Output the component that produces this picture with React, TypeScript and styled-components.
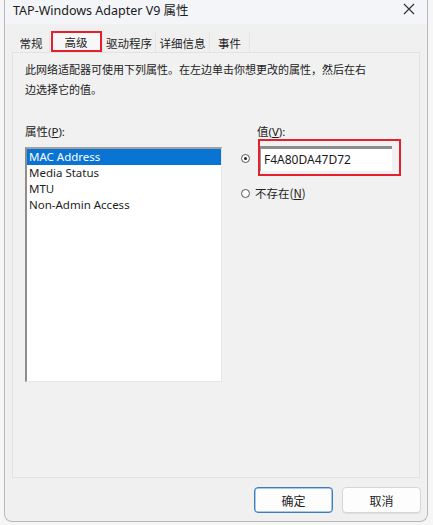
import React from "react";
import styled, { createGlobalStyle } from "styled-components";

const Global = createGlobalStyle`
  html, body { margin: 0; padding: 0; }
  body {
    background: #f6f6f6;
    font-family: "Noto Sans", "Noto Sans CJK SC", sans-serif;
    font-size: 12px;
    color: #1b1b1b;
    width: 433px;
    height: 525px;
    overflow: hidden;
  }
`;

const Stage = styled.div`
  width: 433px;
  height: 525px;
  display: flex;
`;

const Window = styled.div`
  margin-left: 4px;
  width: 422px;
  height: 521px;
  background: #f0f0f0;
  border: 1px solid #b9b9b9;
  border-top: none;
  border-radius: 0 0 8px 8px;
  display: flex;
  flex-direction: column;
`;

const TitleBar = styled.div`
  height: 30px;
  display: flex;
  align-items: center;
  justify-content: space-between;
  padding: 0 8px 0 8px;
  background: #f3f5f8;
  box-sizing: border-box;
  margin-top: -6px;
`;

const Title = styled.span`
  font-size: 12.5px;
  color: #202020;
`;

const Close = styled.div`
  width: 16px;
  height: 16px;
  display: flex;
  align-items: center;
  justify-content: center;
  margin-right: 2px;
`;

const TabRow = styled.div`
  display: flex;
  margin: 8px 0 0 8px;
  height: 20px;
  align-items: flex-end;
  position: relative;
`;

const Tab = styled.div<{ $w: number; $active?: boolean }>`
  width: ${(p) => p.$w}px;
  height: ${(p) => (p.$active ? 20 : 19)}px;
  box-sizing: border-box;
  display: flex;
  align-items: center;
  justify-content: center;
  font-size: 11.5px;
  color: #1e1e1e;
  background: ${(p) => (p.$active ? "#f7f7f7" : "#f0f0f0")};
  border-right: 1px solid #e4e4e4;
  font-family: "Noto Sans CJK SC", sans-serif;
`;

const Highlight = styled.div<{ $l: number; $t: number; $w: number; $h: number }>`
  position: absolute;
  left: ${(p) => p.$l}px;
  top: ${(p) => p.$t}px;
  width: ${(p) => p.$w}px;
  height: ${(p) => p.$h}px;
  border: 2px solid #e3202c;
  box-sizing: border-box;
  pointer-events: none;
`;

const Panel = styled.div`
  margin: 0 0 0 7px;
  width: 408px;
  height: 426px;
  box-sizing: border-box;
  border: 1px solid #e2e2e2;
  background: #f1f1f1;
  padding: 6px 12px 0 12px;
  display: flex;
  flex-direction: column;
`;

const Desc = styled.p`
  margin: 0;
  font-family: "Noto Sans CJK SC", sans-serif;
  font-size: 11px;
  line-height: 20px;
  color: #222;
  white-space: nowrap;
`;

const Columns = styled.div`
  display: flex;
  margin-top: 24px;
`;

const LeftCol = styled.div`
  width: 197px;
  display: flex;
  flex-direction: column;
`;

const Label = styled.div<{ $indent?: number }>`
  font-family: "Noto Sans", "Noto Sans CJK SC", sans-serif;
  font-size: 11.5px;
  height: 17px;
  line-height: 17px;
  margin-left: ${(p) => p.$indent ?? 0}px;
  color: #222;
  u { text-decoration: underline; }
`;

const ListBox = styled.div`
  margin-top: 7px;
  height: 235px;
  box-sizing: border-box;
  background: #fff;
  border-left: 2px solid #8e8e8e;
  border-top: 2px solid #a0a0a0;
  border-right: 1px solid #e6e6e6;
  border-bottom: 1px solid #e6e6e6;
`;

const ListItem = styled.div<{ $sel?: boolean }>`
  height: 16px;
  line-height: 16px;
  padding-left: 2px;
  font-size: 11.5px;
  font-family: "Noto Sans", sans-serif;
  background: ${(p) => (p.$sel ? "#0a74d4" : "transparent")};
  color: ${(p) => (p.$sel ? "#fff" : "#1e1e1e")};
`;

const RightCol = styled.div`
  margin-left: 19px;
  display: flex;
  flex-direction: column;
  position: relative;
`;

const RadioRow = styled.div<{ $mt: number }>`
  display: flex;
  align-items: center;
  margin-top: ${(p) => p.$mt}px;
`;

const Radio = styled.span<{ $on?: boolean }>`
  width: 9px;
  height: 9px;
  border-radius: 50%;
  border: 1px solid #555;
  box-sizing: border-box;
  display: inline-flex;
  align-items: center;
  justify-content: center;
  background: #fff;
  &::after {
    content: "";
    width: 3px;
    height: 3px;
    border-radius: 50%;
    background: ${(p) => (p.$on ? "#222" : "transparent")};
  }
`;

const Edit = styled.div`
  margin-left: 9px;
  width: 133px;
  height: 25px;
  box-sizing: border-box;
  background: #fff;
  border-top: 3px solid #8c8c8c;
  border-left: 2px solid #9a9a9a;
  padding-left: 3px;
  display: flex;
  align-items: center;
  font-size: 12px;
  font-family: "Noto Sans", sans-serif;
  color: #1a1a1a;
  padding-bottom: 2px;
`;

const RadioText = styled.span`
  margin-left: 5px;
  font-size: 11.5px;
  font-family: "Noto Sans CJK SC", sans-serif;
  color: #222;
`;

const Footer = styled.div`
  display: flex;
  justify-content: flex-end;
  gap: 9px;
  margin-top: 9px;
  padding-right: 6px;
`;

const Button = styled.button<{ $primary?: boolean }>`
  width: 79px;
  height: 26px;
  border-radius: 4px;
  border: 1px solid ${(p) => (p.$primary ? "#3a7ec0" : "#d6d6d6")};
  background: #fdfdfd;
  font-family: "Noto Sans CJK SC", sans-serif;
  font-size: 12px;
  color: #1e1e1e;
  padding: 0;
  box-shadow: ${(p) => (p.$primary ? "inset 0 0 0 0.5px #5a93cc" : "0 1px 0 #e0e0e0")};
`;

const tabs = [
  { t: "常规", w: 37 },
  { t: "高级", w: 53, active: true },
  { t: "驱动程序", w: 53 },
  { t: "详细信息", w: 54 },
  { t: "事件", w: 40 },
];

export default function App() {
  return (
    <>
      <Global />
      <Stage>
        <Window>
          <TitleBar>
            <Title>TAP-Windows Adapter V9 属性</Title>
            <Close>
              <svg width="12" height="12" viewBox="0 0 12 12">
                <path d="M1 1 L11 11 M11 1 L1 11" stroke="#333" strokeWidth="1.2" />
              </svg>
            </Close>
          </TitleBar>
          <TabRow>
            {tabs.map((x) => (
              <Tab key={x.t} $w={x.w} $active={x.active}>
                {x.t}
              </Tab>
            ))}
            <Highlight $l={38} $t={-1} $w={51} $h={21} />
          </TabRow>
          <Panel>
            <Desc>
              此网络适配器可使用下列属性。在左边单击你想更改的属性，然后在右
              <br />
              边选择它的值。
            </Desc>
            <Columns>
              <LeftCol>
                <Label>
                  属性(<u>P</u>):
                </Label>
                <ListBox>
                  <ListItem $sel>MAC Address</ListItem>
                  <ListItem>Media Status</ListItem>
                  <ListItem>MTU</ListItem>
                  <ListItem>Non-Admin Access</ListItem>
                </ListBox>
              </LeftCol>
              <RightCol>
                <Label $indent={16}>
                  值(<u>V</u>):
                </Label>
                <RadioRow $mt={6}>
                  <Radio $on />
                  <Edit>F4A80DA47D72</Edit>
                </RadioRow>
                <RadioRow $mt={14}>
                  <Radio />
                  <RadioText>
                    不存在(<u>N</u>)
                  </RadioText>
                </RadioRow>
                <Highlight $l={17} $t={16} $w={143} $h={37} />
              </RightCol>
            </Columns>
          </Panel>
          <Footer>
            <Button $primary>确定</Button>
            <Button>取消</Button>
          </Footer>
        </Window>
      </Stage>
    </>
  );
}
